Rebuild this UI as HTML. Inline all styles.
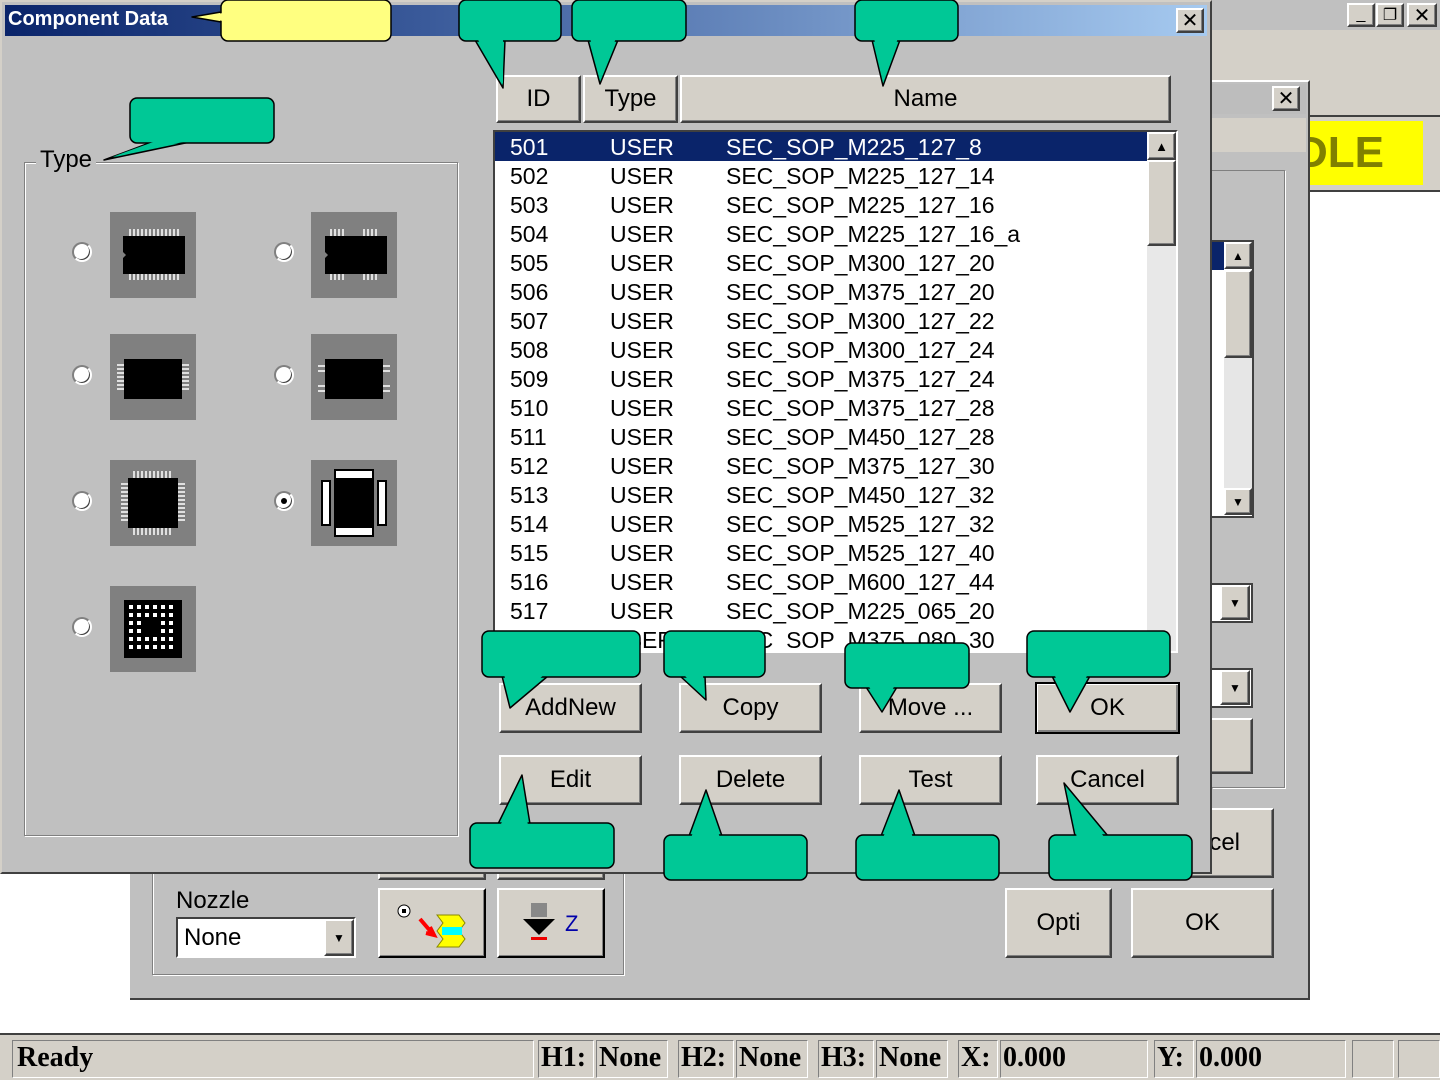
<!DOCTYPE html>
<html><head><meta charset="utf-8"><style>
*{margin:0;padding:0;box-sizing:border-box}
body{width:1440px;height:1080px;background:#fff;position:relative;overflow:hidden;font-family:"Liberation Sans",sans-serif}
.a{position:absolute}
.btn{position:absolute;background:#d4d0c8;border:2px solid;border-color:#fff #404040 #404040 #fff;box-shadow:inset -1px -1px 0 #808080;font-size:24px;color:#000;display:flex;align-items:center;justify-content:center}
.row{position:absolute;left:0;height:29px;width:652px;font-size:23px;line-height:29px;color:#000;white-space:nowrap}
.row span{position:absolute}
.radio{position:absolute;width:20px;height:20px;border-radius:50%;background:#fff;border:2px solid;border-color:#808080 #fff #fff #808080;box-shadow:-1px -1px 0 #404040 inset}
.sb{position:absolute;font-family:"Liberation Serif",serif;font-weight:bold;font-size:28px;top:1042px}
.pan{position:absolute;top:1040px;height:38px;border:1px solid;border-color:#808080 #fff #fff #808080}
</style></head><body>

<div class="a" style="left:1212px;top:0;width:228px;height:30px;background:#c0c0c0"></div>
<div class="a" style="left:1212px;top:30px;width:228px;height:160px;background:#d4d0c8"></div>
<div class="btn" style="left:1347px;top:3px;width:28px;height:24px;font-size:16px">_</div>
<div class="btn" style="left:1376px;top:3px;width:28px;height:24px;font-size:16px">❐</div>
<div class="btn" style="left:1407px;top:3px;width:30px;height:24px;font-size:20px">✕</div>
<div class="a" style="left:1308px;top:115px;width:132px;height:2px;background:#404040"></div>
<div class="a" style="left:1308px;top:121px;width:115px;height:64px;background:#ff0;color:#808000;font-weight:bold;font-size:44px;line-height:64px;overflow:hidden"><span style="margin-left:-12px">DLE</span></div>
<div class="a" style="left:1308px;top:190px;width:132px;height:2px;background:#404040"></div>

<div class="a" style="left:130px;top:80px;width:1180px;height:920px;background:#c0c0c0;border-right:2px solid #404040;border-bottom:2px solid #404040;border-top:2px solid #fff"></div>
<div class="a" style="left:1212px;top:84px;width:94px;height:30px;background:#bdbdbd"></div>
<div class="btn" style="left:1272px;top:86px;width:28px;height:25px;font-size:20px">✕</div>
<div class="a" style="left:1212px;top:118px;width:94px;height:34px;background:#d4d0c8"></div>
<div class="a" style="left:1212px;top:170px;width:73px;height:618px;border:1px solid #808080;border-left:none;box-shadow:1px 1px 0 #fff"></div>
<div class="a" style="left:1212px;top:240px;width:42px;height:278px;background:#fff;border:2px solid #404040;border-left:none"></div>
<div class="a" style="left:1212px;top:242px;width:12px;height:28px;background:#0a246a"></div>
<div class="btn" style="left:1224px;top:242px;width:28px;height:27px;font-size:12px">▲</div>
<div class="btn" style="left:1224px;top:270px;width:28px;height:88px"></div>
<div class="a" style="left:1224px;top:358px;width:28px;height:130px;background:#e6e6e6"></div>
<div class="btn" style="left:1224px;top:488px;width:28px;height:27px;font-size:12px">▼</div>
<div class="a" style="left:1212px;top:583px;width:41px;height:40px;background:#fff;border:2px solid #404040;border-left:none"></div>
<div class="btn" style="left:1220px;top:585px;width:30px;height:35px;font-size:12px">▼</div>
<div class="a" style="left:1212px;top:668px;width:41px;height:40px;background:#fff;border:2px solid #404040;border-left:none"></div>
<div class="btn" style="left:1220px;top:670px;width:30px;height:35px;font-size:12px">▼</div>
<div class="btn" style="left:1205px;top:718px;width:48px;height:56px"></div>
<div class="btn" style="left:1150px;top:808px;width:124px;height:70px;justify-content:flex-end;padding-right:32px">cel</div>
<div class="btn" style="left:1005px;top:888px;width:107px;height:70px">Opti</div>
<div class="btn" style="left:1131px;top:888px;width:143px;height:70px">OK</div>
<div class="a" style="left:152px;top:855px;width:472px;height:120px;border:1px solid #808080;box-shadow:1px 1px 0 #fff,inset 1px 1px 0 #fff"></div>
<div class="a" style="left:176px;top:887px;font-size:24px">Nozzle</div>
<div class="a" style="left:176px;top:917px;width:180px;height:41px;background:#fff;border:2px solid;border-color:#404040 #fff #fff #404040;font-size:24px;line-height:37px;padding-left:6px">None</div>
<div class="btn" style="left:324px;top:919px;width:30px;height:37px;font-size:12px">▼</div>
<div class="btn" style="left:378px;top:862px;width:108px;height:18px"></div>
<div class="btn" style="left:497px;top:862px;width:108px;height:18px"></div>
<div class="btn" style="left:378px;top:888px;width:108px;height:70px;border-color:#fff #000 #000 #fff">
<svg width="100" height="60"><circle cx="22" cy="18" r="6" fill="#fff" stroke="#000"/><rect x="20" y="16" width="4" height="4"/><path d="M38 26l12 14M48 34l4 8-8-2" stroke="#f00" stroke-width="4" fill="none"/><path d="M55 22h22l6 8-6 8 6 8-6 8H55l6-8-6-8 6-8z" fill="#ff0" stroke="#880"/><rect x="60" y="34" width="20" height="8" fill="#0ff"/></svg></div>
<div class="btn" style="left:497px;top:888px;width:108px;height:70px;border-color:#fff #000 #000 #fff">
<svg width="100" height="60"><rect x="30" y="10" width="16" height="14" fill="#888"/><path d="M22 26h32l-16 16z"/><rect x="30" y="26" width="16" height="6"/><rect x="30" y="44" width="16" height="3" fill="#e00"/><text x="64" y="38" font-size="22" fill="#00a" font-family="Liberation Sans">Z</text></svg></div>

<div class="a" style="left:0;top:0;width:1212px;height:874px;background:#c0c0c0;border:2px solid;border-color:#d4d0c8 #404040 #404040 #d4d0c8"></div>
<div class="a" style="left:5px;top:5px;width:1202px;height:31px;background:linear-gradient(90deg,#0a246a 0%,#3a5a9a 35%,#a6caf0 100%)"></div>
<div class="a" style="left:8px;top:8px;color:#fff;font-weight:bold;font-size:20px">Component Data</div>
<div class="btn" style="left:1176px;top:8px;width:28px;height:25px;font-size:20px">✕</div>

<div class="a" style="left:24px;top:162px;width:434px;height:674px;border:1px solid #808080;box-shadow:1px 1px 0 #fff,inset 1px 1px 0 #fff"></div>
<div class="a" style="left:36px;top:146px;background:#c0c0c0;font-size:24px;padding:0 4px">Type</div>

<div class="radio" style="left:72px;top:242px"></div>
<div class="radio" style="left:274px;top:242px"></div>
<div class="radio" style="left:72px;top:365px"></div>
<div class="radio" style="left:274px;top:365px"></div>
<div class="radio" style="left:72px;top:491px"></div>
<div class="radio" style="left:274px;top:491px"><div style="width:6px;height:6px;background:#000;border-radius:50%;margin:5px"></div></div>
<div class="radio" style="left:72px;top:617px"></div>

<svg class="a" style="left:110px;top:212px" width="86" height="86"><rect width="86" height="86" fill="#808080"/><path d="M20 17v7M24 17v7M28 17v7M32 17v7M36 17v7M40 17v7M44 17v7M48 17v7M52 17v7M56 17v7M60 17v7M64 17v7M68 17v7M20 61v7M24 61v7M28 61v7M32 61v7M36 61v7M40 61v7M44 61v7M48 61v7M52 61v7M56 61v7M60 61v7M64 61v7M68 61v7" stroke="#fff" stroke-width="1.5"/><path d="M13 24h62v38H13v-16l3-3-3-3z"/></svg>
<svg class="a" style="left:311px;top:212px" width="86" height="86"><rect width="86" height="86" fill="#808080"/><path d="M20 17v7M24 17v7M28 17v7M32 17v7M53 17v7M57 17v7M61 17v7M65 17v7M20 61v7M24 61v7M28 61v7M32 61v7M53 61v7M57 61v7M61 61v7M65 61v7" stroke="#fff" stroke-width="1.5"/><path d="M14 24h62v38H14v-16l3-3-3-3z"/></svg>
<svg class="a" style="left:110px;top:334px" width="86" height="86"><rect width="86" height="86" fill="#808080"/><rect x="14" y="25" width="58" height="40"/><path d="M7 31h7M7 35h7M7 39h7M7 43h7M7 47h7M7 51h7M7 55h7M72 31h7M72 35h7M72 39h7M72 43h7M72 47h7M72 51h7M72 55h7" stroke="#fff" stroke-width="1.5"/></svg>
<svg class="a" style="left:311px;top:334px" width="86" height="86"><rect width="86" height="86" fill="#808080"/><rect x="14" y="25" width="58" height="40"/><path d="M7 32h7M7 37h7M7 57h7M7 52h7M72 32h7M72 37h7M72 52h7M72 57h7" stroke="#fff" stroke-width="1.5"/></svg>
<svg class="a" style="left:110px;top:460px" width="86" height="86"><rect width="86" height="86" fill="#808080"/><rect x="18" y="18" width="50" height="50"/><path d="M24 11v7M28 11v7M32 11v7M36 11v7M40 11v7M44 11v7M48 11v7M52 11v7M56 11v7M60 11v7M24 68v7M28 68v7M32 68v7M36 68v7M40 68v7M44 68v7M48 68v7M52 68v7M56 68v7M60 68v7M11 24h7M11 28h7M11 32h7M11 36h7M11 40h7M11 44h7M11 48h7M11 52h7M11 56h7M11 60h7M68 24h7M68 28h7M68 32h7M68 36h7M68 40h7M68 44h7M68 48h7M68 52h7M68 56h7M68 60h7" stroke="#fff" stroke-width="1.5"/></svg>
<svg class="a" style="left:311px;top:460px" width="86" height="86"><rect width="86" height="86" fill="#808080"/><rect x="23" y="18" width="40" height="50"/><rect x="24" y="10" width="38" height="9" fill="#fff" stroke="#000" stroke-width="2"/><rect x="24" y="67" width="38" height="9" fill="#fff" stroke="#000" stroke-width="2"/><rect x="11" y="21" width="8" height="44" fill="#fff" stroke="#000" stroke-width="2"/><rect x="67" y="21" width="8" height="44" fill="#fff" stroke="#000" stroke-width="2"/></svg>
<svg class="a" style="left:110px;top:586px" width="86" height="86"><rect width="86" height="86" fill="#808080"/><rect x="14" y="14" width="58" height="58"/><g fill="#fff"><path d="M19 19h4v4h-4zM27 19h4v4h-4zM35 19h4v4h-4zM43 19h4v4h-4zM51 19h4v4h-4zM59 19h4v4h-4zM19 27h4v4h-4zM27 27h4v4h-4zM35 27h4v4h-4zM43 27h4v4h-4zM51 27h4v4h-4zM59 27h4v4h-4zM19 35h4v4h-4zM27 35h4v4h-4zM51 35h4v4h-4zM59 35h4v4h-4zM19 43h4v4h-4zM27 43h4v4h-4zM51 43h4v4h-4zM59 43h4v4h-4zM19 51h4v4h-4zM27 51h4v4h-4zM35 51h4v4h-4zM43 51h4v4h-4zM51 51h4v4h-4zM59 51h4v4h-4zM19 59h4v4h-4zM27 59h4v4h-4zM35 59h4v4h-4zM43 59h4v4h-4zM51 59h4v4h-4zM59 59h4v4h-4z"/></g></svg>

<div class="btn" style="left:496px;top:75px;width:85px;height:48px">ID</div>
<div class="btn" style="left:583px;top:75px;width:95px;height:48px">Type</div>
<div class="btn" style="left:680px;top:75px;width:491px;height:48px">Name</div>

<div class="a" style="left:493px;top:130px;width:685px;height:523px;background:#fff;border:2px solid;border-color:#404040 #fff #fff #404040;overflow:hidden">
<div class="a" style="left:0;top:0;width:652px;height:29px;background:#0a246a"></div>
<div class="row" style="top:1px;color:#fff"><span style="left:15px">501</span><span style="left:115px">USER</span><span style="left:231px">SEC_SOP_M225_127_8</span></div>
<div class="row" style="top:30px"><span style="left:15px">502</span><span style="left:115px">USER</span><span style="left:231px">SEC_SOP_M225_127_14</span></div>
<div class="row" style="top:59px"><span style="left:15px">503</span><span style="left:115px">USER</span><span style="left:231px">SEC_SOP_M225_127_16</span></div>
<div class="row" style="top:88px"><span style="left:15px">504</span><span style="left:115px">USER</span><span style="left:231px">SEC_SOP_M225_127_16_a</span></div>
<div class="row" style="top:117px"><span style="left:15px">505</span><span style="left:115px">USER</span><span style="left:231px">SEC_SOP_M300_127_20</span></div>
<div class="row" style="top:146px"><span style="left:15px">506</span><span style="left:115px">USER</span><span style="left:231px">SEC_SOP_M375_127_20</span></div>
<div class="row" style="top:175px"><span style="left:15px">507</span><span style="left:115px">USER</span><span style="left:231px">SEC_SOP_M300_127_22</span></div>
<div class="row" style="top:204px"><span style="left:15px">508</span><span style="left:115px">USER</span><span style="left:231px">SEC_SOP_M300_127_24</span></div>
<div class="row" style="top:233px"><span style="left:15px">509</span><span style="left:115px">USER</span><span style="left:231px">SEC_SOP_M375_127_24</span></div>
<div class="row" style="top:262px"><span style="left:15px">510</span><span style="left:115px">USER</span><span style="left:231px">SEC_SOP_M375_127_28</span></div>
<div class="row" style="top:291px"><span style="left:15px">511</span><span style="left:115px">USER</span><span style="left:231px">SEC_SOP_M450_127_28</span></div>
<div class="row" style="top:320px"><span style="left:15px">512</span><span style="left:115px">USER</span><span style="left:231px">SEC_SOP_M375_127_30</span></div>
<div class="row" style="top:349px"><span style="left:15px">513</span><span style="left:115px">USER</span><span style="left:231px">SEC_SOP_M450_127_32</span></div>
<div class="row" style="top:378px"><span style="left:15px">514</span><span style="left:115px">USER</span><span style="left:231px">SEC_SOP_M525_127_32</span></div>
<div class="row" style="top:407px"><span style="left:15px">515</span><span style="left:115px">USER</span><span style="left:231px">SEC_SOP_M525_127_40</span></div>
<div class="row" style="top:436px"><span style="left:15px">516</span><span style="left:115px">USER</span><span style="left:231px">SEC_SOP_M600_127_44</span></div>
<div class="row" style="top:465px"><span style="left:15px">517</span><span style="left:115px">USER</span><span style="left:231px">SEC_SOP_M225_065_20</span></div>
<div class="row" style="top:494px"><span style="left:15px">518</span><span style="left:115px">USER</span><span style="left:231px">SEC_SOP_M375_080_30</span></div>
<div class="btn" style="left:652px;top:0;width:29px;height:28px;font-size:13px">▲</div>
<div class="btn" style="left:652px;top:28px;width:29px;height:86px"></div>
<div class="a" style="left:652px;top:114px;width:29px;height:410px;background:#e8e8e8"></div>
</div>

<div class="btn" style="left:499px;top:683px;width:143px;height:50px">AddNew</div>
<div class="btn" style="left:679px;top:683px;width:143px;height:50px">Copy</div>
<div class="btn" style="left:859px;top:683px;width:143px;height:50px">Move ...</div>
<div class="btn" style="left:1035px;top:682px;width:145px;height:52px;border-color:#000;box-shadow:inset 1px 1px 0 #fff,inset -2px -2px 0 #808080">OK</div>
<div class="btn" style="left:499px;top:755px;width:143px;height:50px">Edit</div>
<div class="btn" style="left:679px;top:755px;width:143px;height:50px">Delete</div>
<div class="btn" style="left:859px;top:755px;width:143px;height:50px">Test</div>
<div class="btn" style="left:1036px;top:755px;width:143px;height:50px">Cancel</div>

<svg class="a" style="left:0;top:0" width="1440" height="1080">
<g stroke="#000" stroke-width="1.5" stroke-linejoin="round">
<path fill="#ffff80" d="M221 12 L192 17 L221 22 Z"/><rect x="221" y="0" width="170" height="41" rx="7" fill="#ffff80"/><path fill="#ffff80" stroke="none" d="M223 13 L200 17 L223 21 Z"/>
<g fill="#00c896">
<path d="M475 40 L503 88 L505 40 Z"/><rect x="459" y="0" width="102" height="41" rx="7"/><path stroke="none" d="M477 38 L503 84 L503 38 Z"/>
<path d="M588 40 L600 84 L618 40 Z"/><rect x="572" y="0" width="114" height="41" rx="7"/><path stroke="none" d="M590 38 L600 80 L616 38 Z"/>
<path d="M872 40 L883 86 L900 40 Z"/><rect x="855" y="0" width="103" height="41" rx="7"/><path stroke="none" d="M874 38 L883 82 L898 38 Z"/>
<path d="M152 142 L104 160 L190 142 Z"/><rect x="130" y="98" width="144" height="45" rx="7"/><path stroke="none" d="M156 141 L112 157 L188 141 Z"/>
<path d="M502 676 L510 708 L548 676 Z"/><rect x="482" y="631" width="158" height="46" rx="7"/><path stroke="none" d="M504 674 L511 703 L545 674 Z"/>
<path d="M680 676 L706 700 L705 676 Z"/><rect x="664" y="631" width="101" height="46" rx="7"/><path stroke="none" d="M683 674 L704 695 L703 674 Z"/>
<path d="M866 687 L882 712 L897 687 Z"/><rect x="845" y="643" width="124" height="45" rx="7"/><path stroke="none" d="M868 685 L882 708 L895 685 Z"/>
<path d="M1052 676 L1070 712 L1090 676 Z"/><rect x="1027" y="631" width="143" height="46" rx="7"/><path stroke="none" d="M1054 674 L1070 707 L1088 674 Z"/>
<path d="M498 824 L522 775 L530 824 Z"/><rect x="470" y="823" width="144" height="45" rx="7"/><path stroke="none" d="M500 826 L522 780 L528 826 Z"/>
<path d="M689 836 L706 790 L722 836 Z"/><rect x="664" y="835" width="143" height="45" rx="7"/><path stroke="none" d="M691 838 L706 795 L720 838 Z"/>
<path d="M881 836 L899 790 L915 836 Z"/><rect x="856" y="835" width="143" height="45" rx="7"/><path stroke="none" d="M883 838 L899 795 L913 838 Z"/>
<path d="M1075 836 L1064 783 L1108 836 Z"/><rect x="1049" y="835" width="143" height="45" rx="7"/><path stroke="none" d="M1077 838 L1066 788 L1105 838 Z"/>
</g></g></svg>

<div class="a" style="left:0;top:1033px;width:1440px;height:47px;background:#d4d0c8;border-top:2px solid #404040"></div>
<div class="pan" style="left:12px;width:522px"></div>
<div class="sb" style="left:17px">Ready</div>
<div class="pan" style="left:538px;width:56px"></div><div class="sb" style="left:541px">H1:</div>
<div class="pan" style="left:596px;width:72px"></div><div class="sb" style="left:599px">None</div>
<div class="pan" style="left:678px;width:56px"></div><div class="sb" style="left:681px">H2:</div>
<div class="pan" style="left:736px;width:72px"></div><div class="sb" style="left:739px">None</div>
<div class="pan" style="left:818px;width:56px"></div><div class="sb" style="left:821px">H3:</div>
<div class="pan" style="left:876px;width:72px"></div><div class="sb" style="left:879px">None</div>
<div class="pan" style="left:958px;width:40px"></div><div class="sb" style="left:961px">X:</div>
<div class="pan" style="left:1000px;width:148px"></div><div class="sb" style="left:1003px">0.000</div>
<div class="pan" style="left:1154px;width:40px"></div><div class="sb" style="left:1157px">Y:</div>
<div class="pan" style="left:1196px;width:150px"></div><div class="sb" style="left:1199px">0.000</div>
<div class="pan" style="left:1352px;width:42px"></div>
<div class="pan" style="left:1398px;width:42px"></div>
</body></html>
